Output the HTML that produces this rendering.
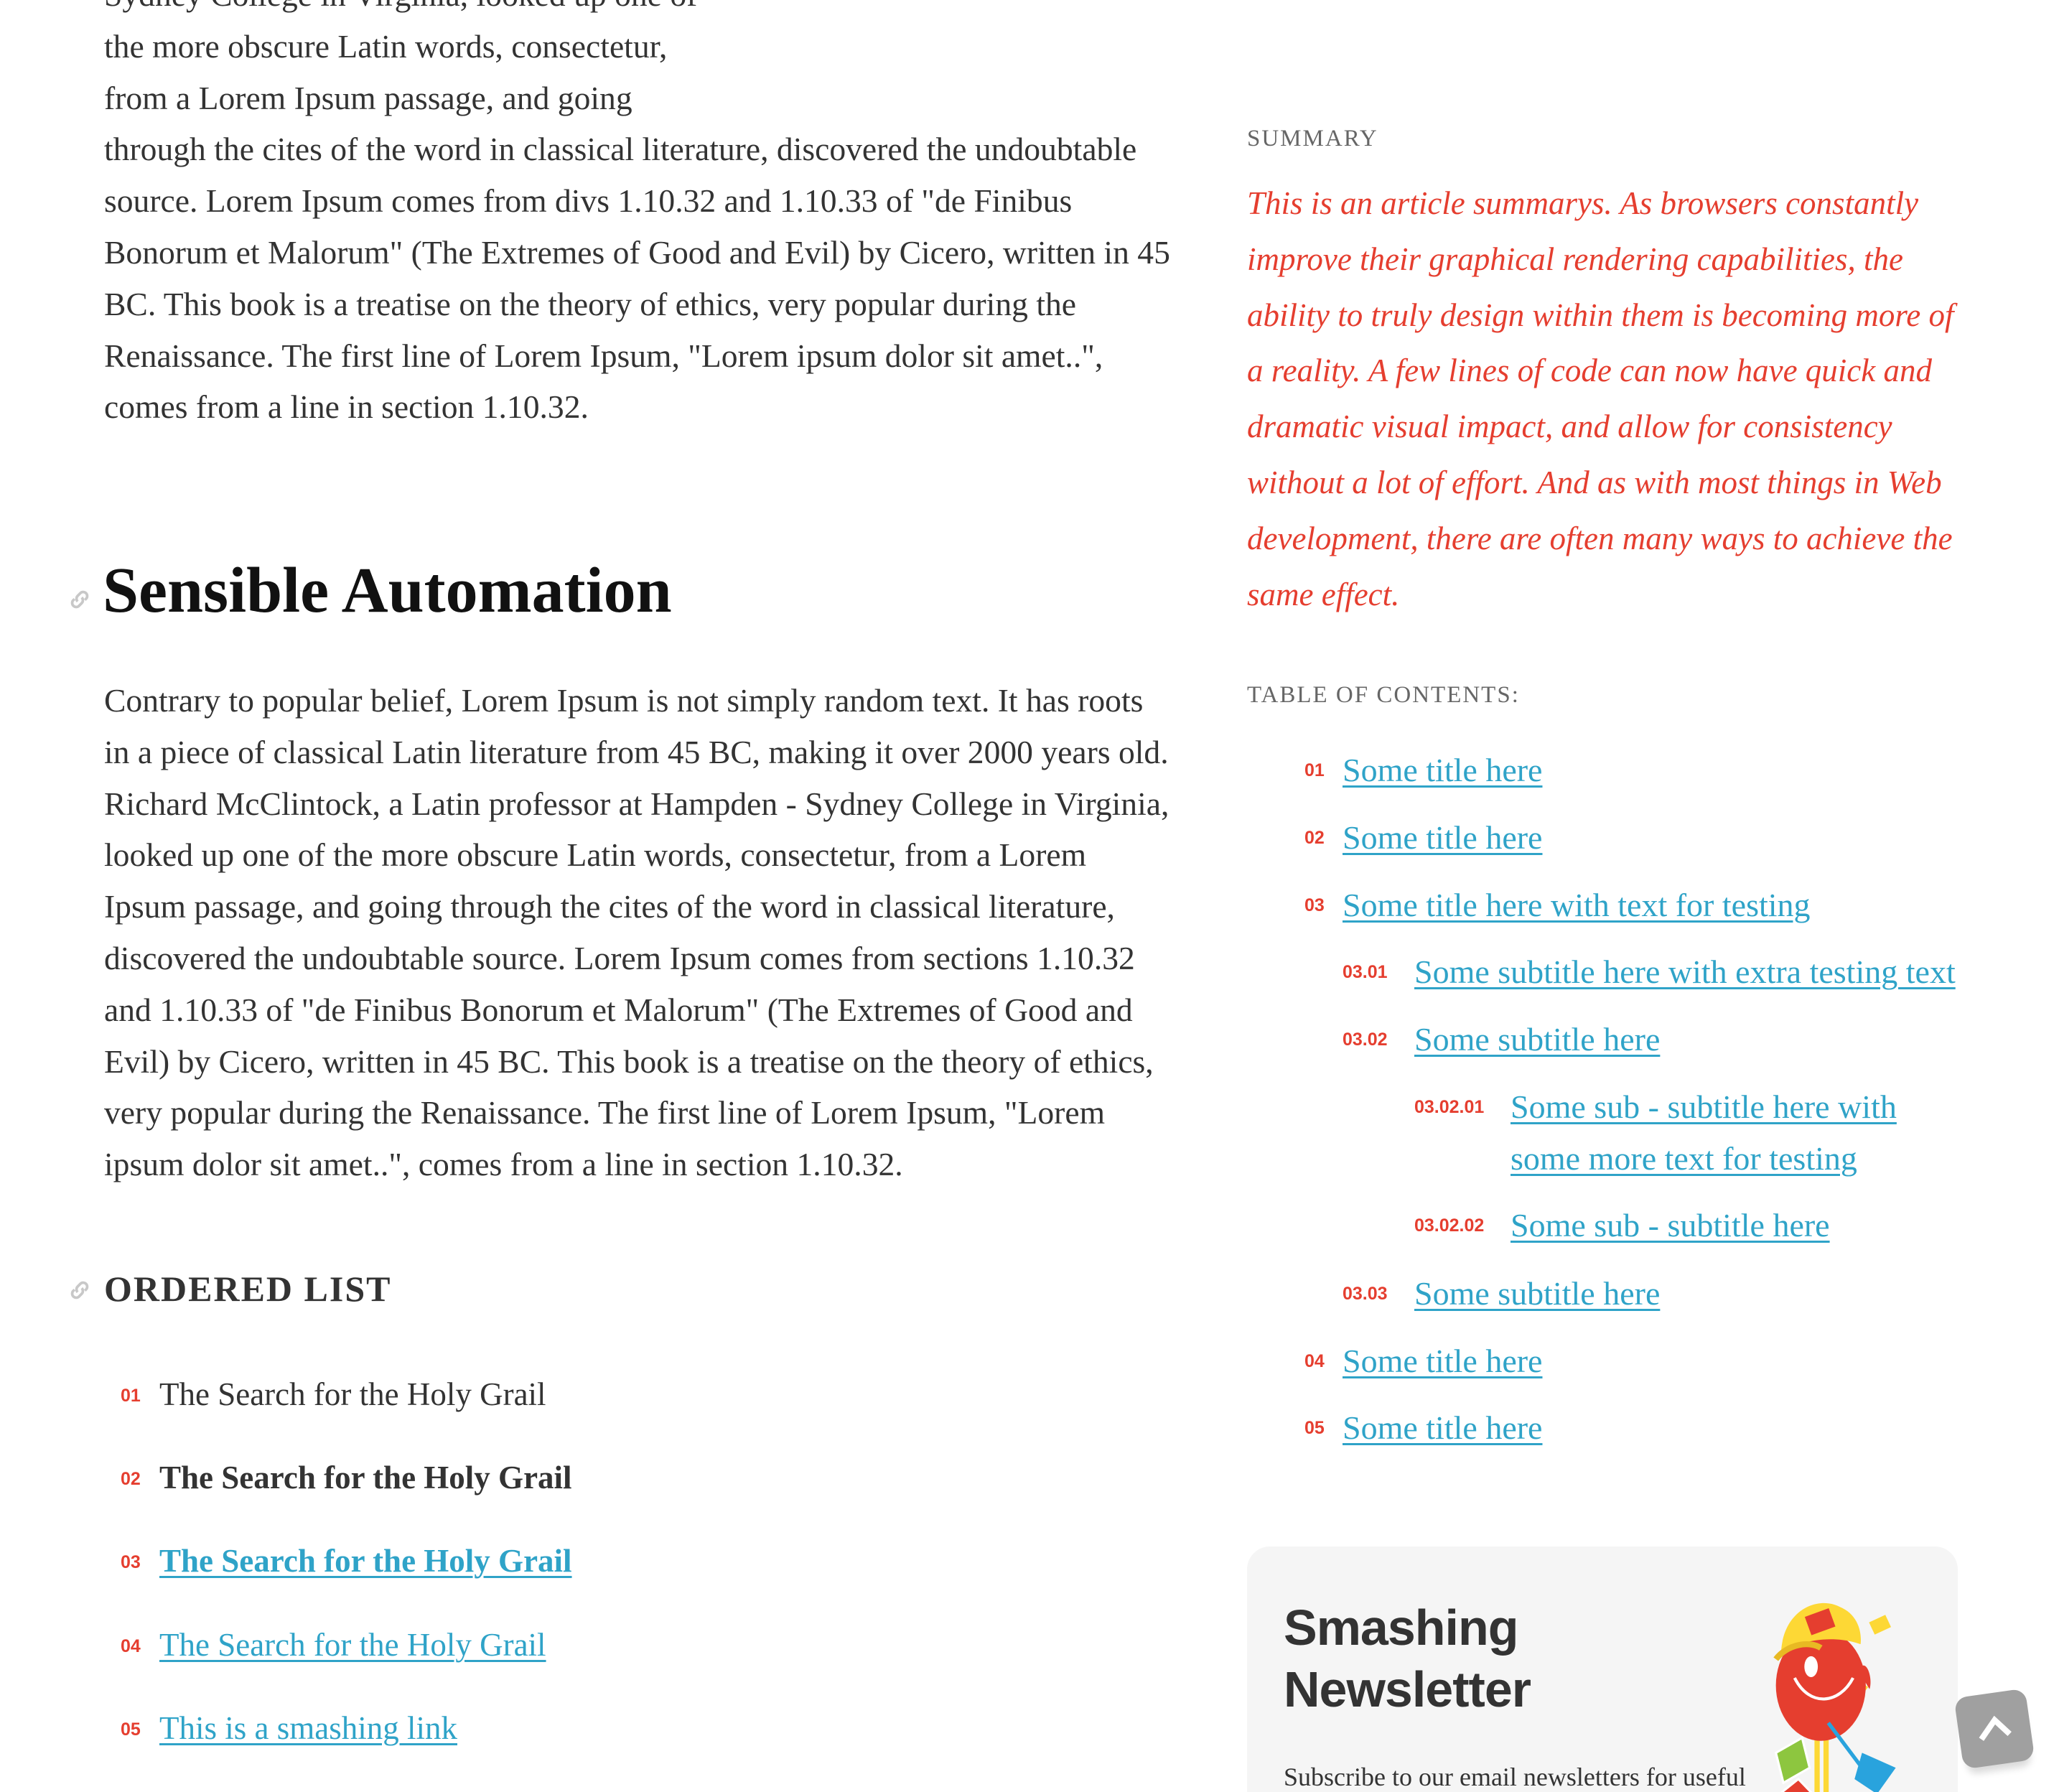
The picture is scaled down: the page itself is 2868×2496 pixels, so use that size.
<!DOCTYPE html>
<html><head><meta charset="utf-8"><style>
html,body{margin:0;padding:0;background:#fff;height:2496px;overflow:hidden}
body{width:2868px;position:relative;font-family:"Liberation Serif",serif;color:#333}
.a{position:absolute;white-space:nowrap}
.p{font-size:45.6px;line-height:71.8px}
.h1{font-size:90px;font-weight:bold;color:#111;line-height:100px}
.h2{font-size:50px;font-weight:bold;letter-spacing:2px;line-height:60px}
.num{position:absolute;font-family:"Liberation Sans",sans-serif;font-weight:bold;color:#e53e2f;font-size:25px;line-height:40px}
.li{font-size:45px;line-height:60px}
a,.lk{color:#2fa3c8;text-decoration:underline;text-decoration-thickness:3px;text-underline-offset:6px}
.sum{font-size:45px;font-style:italic;color:#e53e2f;line-height:77.8px}
.cap{font-size:33px;color:#666;letter-spacing:2px;line-height:40px}
.toc{font-size:46px;line-height:60px}
</style></head><body>

<div class="a p" style="left:145px;top:-43px">Sydney College in Virginia, looked up one of<br>the more obscure Latin words, consectetur,<br>from a Lorem Ipsum passage, and going<br>through the cites of the word in classical literature, discovered the undoubtable<br>source. Lorem Ipsum comes from divs 1.10.32 and 1.10.33 of "de Finibus<br>Bonorum et Malorum" (The Extremes of Good and Evil) by Cicero, written in 45<br>BC. This book is a treatise on the theory of ethics, very popular during the<br>Renaissance. The first line of Lorem Ipsum, "Lorem ipsum dolor sit amet..",<br>comes from a line in section 1.10.32.</div>

<svg class="a" style="left:94px;top:818px" width="34" height="34" viewBox="0 0 24 24" fill="none" stroke="#c8c8c8" stroke-width="2.6"><path d="M10 14a4 4 0 0 1 0-5.6l3-3a4 4 0 0 1 5.6 5.6l-1.5 1.5"/><path d="M14 10a4 4 0 0 1 0 5.6l-3 3a4 4 0 0 1-5.6-5.6l1.5-1.5"/></svg>
<div class="a h1" style="left:143px;top:773px">Sensible Automation</div>

<div class="a p" style="left:145px;top:940px">Contrary to popular belief, Lorem Ipsum is not simply random text. It has roots<br>in a piece of classical Latin literature from 45 BC, making it over 2000 years old.<br>Richard McClintock, a Latin professor at Hampden - Sydney College in Virginia,<br>looked up one of the more obscure Latin words, consectetur, from a Lorem<br>Ipsum passage, and going through the cites of the word in classical literature,<br>discovered the undoubtable source. Lorem Ipsum comes from sections 1.10.32<br>and 1.10.33 of "de Finibus Bonorum et Malorum" (The Extremes of Good and<br>Evil) by Cicero, written in 45 BC. This book is a treatise on the theory of ethics,<br>very popular during the Renaissance. The first line of Lorem Ipsum, "Lorem<br>ipsum dolor sit amet..", comes from a line in section 1.10.32.</div>

<svg class="a" style="left:94px;top:1780px" width="34" height="34" viewBox="0 0 24 24" fill="none" stroke="#c8c8c8" stroke-width="2.6"><path d="M10 14a4 4 0 0 1 0-5.6l3-3a4 4 0 0 1 5.6 5.6l-1.5 1.5"/><path d="M14 10a4 4 0 0 1 0 5.6l-3 3a4 4 0 0 1-5.6-5.6l1.5-1.5"/></svg>
<div class="a h2" style="left:145px;top:1765px">ORDERED LIST</div>

<div class="num" style="left:168px;top:1924px">01</div><div class="a li" style="left:222px;top:1912px">The Search for the Holy Grail</div>
<div class="num" style="left:168px;top:2040px">02</div><div class="a li" style="left:222px;top:2028px;font-weight:bold">The Search for the Holy Grail</div>
<div class="num" style="left:168px;top:2156px">03</div><div class="a li lk" style="left:222px;top:2144px;font-weight:bold">The Search for the Holy Grail</div>
<div class="num" style="left:168px;top:2273px">04</div><div class="a li lk" style="left:222px;top:2261px">The Search for the Holy Grail</div>
<div class="num" style="left:168px;top:2389px">05</div><div class="a li lk" style="left:222px;top:2377px">This is a smashing link</div>

<div class="a cap" style="left:1737px;top:173px">SUMMARY</div>
<div class="a sum" style="left:1737px;top:245px">This is an article summarys. As browsers constantly<br>improve their graphical rendering capabilities, the<br>ability to truly design within them is becoming more of<br>a reality. A few lines of code can now have quick and<br>dramatic visual impact, and allow for consistency<br>without a lot of effort. And as with most things in Web<br>development, there are often many ways to achieve the<br>same effect.</div>

<div class="a cap" style="left:1737px;top:948px">TABLE OF CONTENTS:</div>

<div class="num" style="left:1817px;top:1053px">01</div><div class="a toc lk" style="left:1870px;top:1043px">Some title here</div>
<div class="num" style="left:1817px;top:1147px">02</div><div class="a toc lk" style="left:1870px;top:1137px">Some title here</div>
<div class="num" style="left:1817px;top:1241px">03</div><div class="a toc lk" style="left:1870px;top:1231px">Some title here with text for testing</div>
<div class="num" style="left:1870px;top:1334px">03.01</div><div class="a toc lk" style="left:1970px;top:1324px">Some subtitle here with extra testing text</div>
<div class="num" style="left:1870px;top:1428px">03.02</div><div class="a toc lk" style="left:1970px;top:1418px">Some subtitle here</div>
<div class="num" style="left:1970px;top:1522px">03.02.01</div><div class="a toc lk" style="left:2104px;top:1512px">Some sub - subtitle here with</div>
<div class="a toc lk" style="left:2104px;top:1584px">some more text for testing</div>
<div class="num" style="left:1970px;top:1687px">03.02.02</div><div class="a toc lk" style="left:2104px;top:1677px">Some sub - subtitle here</div>
<div class="num" style="left:1870px;top:1782px">03.03</div><div class="a toc lk" style="left:1970px;top:1772px">Some subtitle here</div>
<div class="num" style="left:1817px;top:1876px">04</div><div class="a toc lk" style="left:1870px;top:1866px">Some title here</div>
<div class="num" style="left:1817px;top:1969px">05</div><div class="a toc lk" style="left:1870px;top:1959px">Some title here</div>

<div class="a" style="left:1737px;top:2154px;width:990px;height:342px;background:#f5f5f5;border-radius:32px 32px 0 0"></div>
<div class="a" style="left:1788px;top:2224px;font-family:'Liberation Sans',sans-serif;font-weight:bold;font-size:70px;line-height:86px;color:#333;letter-spacing:-1px">Smashing<br>Newsletter</div>
<div class="a" style="left:1788px;top:2451px;font-size:36px;line-height:48px;color:#333">Subscribe to our email newsletters for useful</div>

<svg class="a" style="left:2458px;top:2222px" width="240" height="274" viewBox="0 0 230 262">
<path d="M70 180 L70 271 M82 180 L82 271" stroke="#fdd835" stroke-width="7"/>
<path d="M80 165 C100 150 120 140 135 120" stroke="#fdd835" stroke-width="8" fill="none"/>
<ellipse cx="75" cy="120" rx="60" ry="74" fill="#e53e2f"/>
<path d="M22 75 C25 20 70 0 100 15 C125 25 130 50 128 65 C100 55 60 55 22 75Z" fill="#fdd835"/>
<path d="M15 85 C30 65 60 60 75 70" stroke="#e8b923" stroke-width="8" fill="none"/>
<rect x="57" y="22" width="34" height="26" fill="#e53e2f" transform="rotate(-20 74 35)"/>
<path d="M40 110 C60 150 100 145 118 110" stroke="#fff" stroke-width="4" fill="none"/>
<ellipse cx="62" cy="95" rx="9" ry="14" fill="#fff"/>
<path d="M125 100 C135 80 145 110 140 125" fill="#e53e2f"/>
<rect x="142" y="30" width="24" height="18" fill="#fdd835" transform="rotate(-25 154 39)"/>
<path d="M85 170 L145 250" stroke="#29a3dd" stroke-width="5"/>
<path d="M130 210 L175 230 L150 265 L120 245Z" fill="#29a3dd"/>
<path d="M15 210 L50 190 L60 230 L25 250Z" fill="#8dc63f" stroke="#fff" stroke-width="3"/>
<path d="M20 265 L45 245 L70 271 L10 271Z" fill="#e53e2f" stroke="#fff" stroke-width="3"/>
</svg>

<div class="a" style="left:2728px;top:2358px;width:100px;height:100px;background:#a0a0a0;border-radius:18px;transform:rotate(-8deg);box-shadow:0 14px 10px -6px rgba(0,0,0,0.15)">
<svg width="100" height="100" viewBox="0 0 100 100"><path d="M30 62 L52 38 L70 60" stroke="#fff" stroke-width="8" fill="none"/></svg>
</div>

</body></html>
